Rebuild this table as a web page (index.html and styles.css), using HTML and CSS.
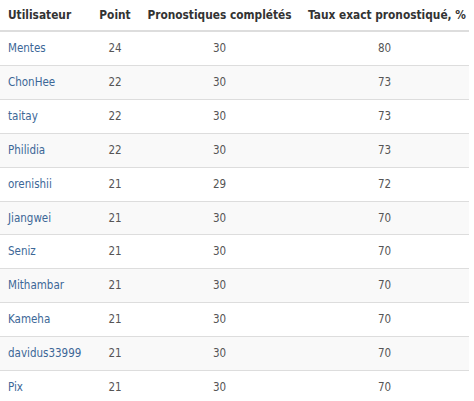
FILE: index.html
```html
<!DOCTYPE html>
<html lang="fr">
<head>
<meta charset="utf-8">
<link rel="stylesheet" href="styles.css">
</head>
<body>
<table class="ranking">
  <colgroup>
    <col class="c-user"><col class="c-point"><col class="c-done"><col class="c-rate">
  </colgroup>
  <thead>
    <tr>
      <th class="left">Utilisateur</th>
      <th>Point</th>
      <th>Pronostiques complétés</th>
      <th>Taux exact pronostiqué, %</th>
    </tr>
  </thead>
  <tbody>
    <tr><td class="left"><a href="#">Mentes</a></td><td>24</td><td>30</td><td>80</td></tr>
    <tr><td class="left"><a href="#">ChonHee</a></td><td>22</td><td>30</td><td>73</td></tr>
    <tr><td class="left"><a href="#">taitay</a></td><td>22</td><td>30</td><td>73</td></tr>
    <tr><td class="left"><a href="#">Philidia</a></td><td>22</td><td>30</td><td>73</td></tr>
    <tr><td class="left"><a href="#">orenishii</a></td><td>21</td><td>29</td><td>72</td></tr>
    <tr><td class="left"><a href="#">Jiangwei</a></td><td>21</td><td>30</td><td>70</td></tr>
    <tr><td class="left"><a href="#">Seniz</a></td><td>21</td><td>30</td><td>70</td></tr>
    <tr><td class="left"><a href="#">Mithambar</a></td><td>21</td><td>30</td><td>70</td></tr>
    <tr><td class="left"><a href="#">Kameha</a></td><td>21</td><td>30</td><td>70</td></tr>
    <tr><td class="left"><a href="#">davidus33999</a></td><td>21</td><td>30</td><td>70</td></tr>
    <tr><td class="left"><a href="#">Pix</a></td><td>21</td><td>30</td><td>70</td></tr>
  </tbody>
</table>
</body>
</html>
```
FILE: styles.css
```css
html, body {
  margin: 0;
  padding: 0;
  background: #fff;
  overflow: hidden;
}
body {
  font-family: "DejaVu Sans Condensed", "Liberation Sans", sans-serif;
  font-size: 11.5px;
  color: #555;
}
.ranking {
  border-collapse: collapse;
  table-layout: fixed;
  width: 469px;
}
.c-user { width: 91px; }
.c-point { width: 48px; }
.c-done { width: 161px; }
.c-rate { width: 169px; }
.ranking th,
.ranking td {
  padding: 8px;
  line-height: 16.9px;
  text-align: center;
  white-space: nowrap;
  overflow: visible;
}
.ranking th {
  font-size: 11.8px;
  font-weight: bold;
  color: #333;
  height: 14px;
  line-height: 14px;
  padding-top: 8px;
  padding-bottom: 8px;
  border-bottom: 2px solid #ddd;
}
.ranking td {
  border-top: 1px solid #ddd;
}
.ranking tbody tr:first-child td {
  border-top: 0;
}
.ranking tbody tr:nth-child(even) td {
  background: #f9f9f9;
}
.ranking .left {
  text-align: left;
}
.ranking a {
  color: #3c6797;
  text-decoration: none;
}
```
